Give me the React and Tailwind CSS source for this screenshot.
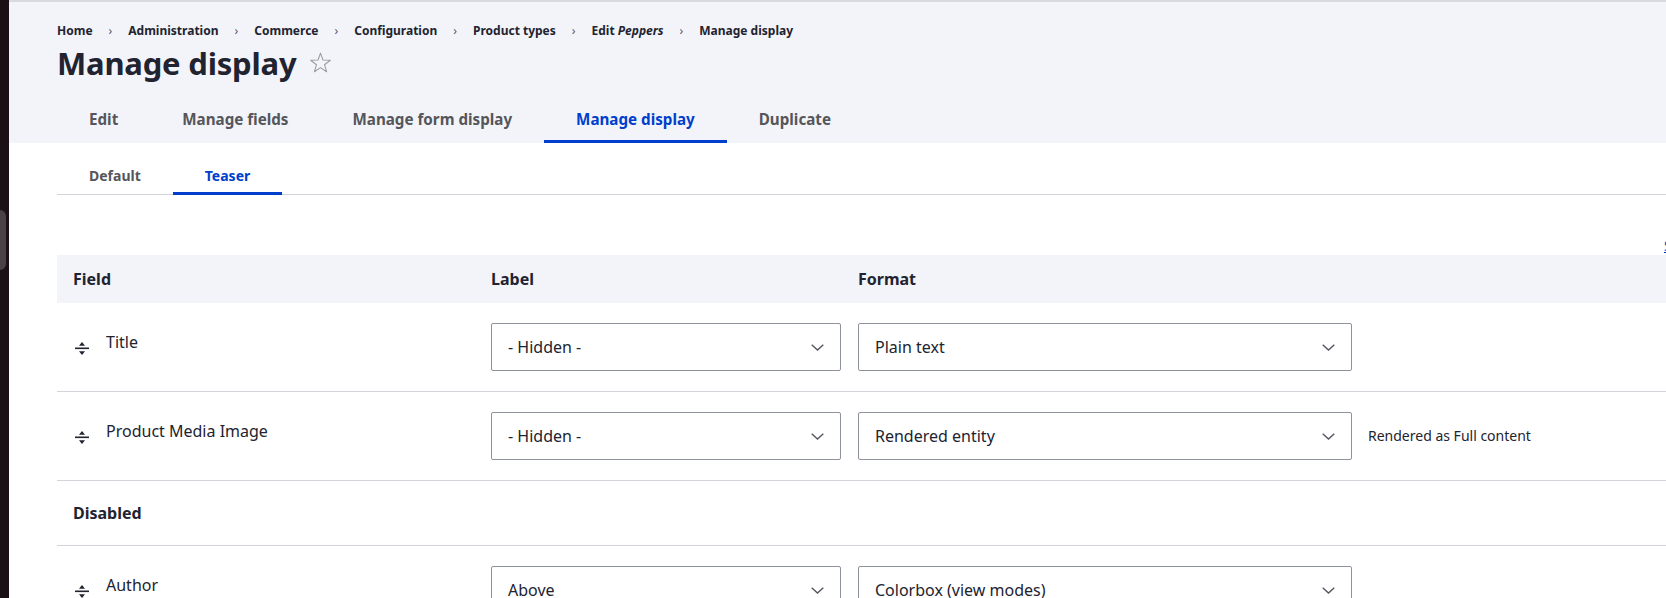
import { useState } from 'react';

const crumbs = ['Home', 'Administration', 'Commerce', 'Configuration', 'Product types'];

const tabs = ['Edit', 'Manage fields', 'Manage form display', 'Manage display', 'Duplicate'];

const rows = [
  { name: 'Title', label: '- Hidden -', format: 'Plain text', summary: '' },
  { name: 'Product Media Image', label: '- Hidden -', format: 'Rendered entity', summary: 'Rendered as Full content' },
];

function DragHandle() {
  return (
    <svg width="14" height="14" viewBox="0 0 14 14" className="shrink-0 mt-[12px]">
      <polygon points="7,0 4,3.8 10,3.8" fill="#222330" />
      <rect x="0" y="5.5" width="14" height="1.6" fill="#222330" />
      <polygon points="4,9.2 10,9.2 7,13" fill="#222330" />
    </svg>
  );
}

function Select({ value, width }) {
  return (
    <div className={`${width} h-12 border border-[#8e929c] rounded-[2px] bg-white flex items-center justify-between pl-4 pr-4 text-base text-[#222330]`}>
      <span>{value}</span>
      <svg width="13" height="7" viewBox="0 0 13 7" fill="none">
        <path d="M0.7 0.7 L6.5 6 L12.3 0.7" stroke="#545560" strokeWidth="1.4" />
      </svg>
    </div>
  );
}

function FieldRow({ row }) {
  return (
    <div className="grid grid-cols-[418px_367px_510px_1fr] border-b border-[#d3d4d9]">
      <div className="flex items-start pl-[18px] pt-[27px]">
        <DragHandle />
        <span className="ml-[17px] text-base leading-6 text-[#222330]">{row.name}</span>
      </div>
      <div className="pl-4 py-5">
        <Select value={row.label} width="w-[350px]" />
      </div>
      <div className="pl-4 py-5">
        <Select value={row.format} width="w-[494px]" />
      </div>
      <div className="pl-4 py-5">
        <div className="h-12 flex items-center text-sm text-[#222330] whitespace-nowrap">{row.summary}</div>
      </div>
    </div>
  );
}

function App() {
  const [activeSub, setActiveSub] = useState('Teaser');

  return (
    <div className="w-[1666px] h-[598px] overflow-hidden flex bg-white font-['Noto_Sans',sans-serif] text-[#222330]">
      {/* desktop edge */}
      <div className="w-[9px] shrink-0 bg-[#1b1016] pt-[210px]">
        <div className="w-[6px] h-[60px] rounded-r-md bg-[#4a4045]" />
      </div>

      <div className="flex-1 min-w-0">
        {/* Header */}
        <div className="border-t-2 border-[#d9dae0] bg-[#f3f4f9] pl-12">
          <nav className="pt-5 flex items-center text-[12px] font-bold leading-[18px]">
            {crumbs.map((c) => (
              <span key={c} className="flex items-center">
                <span>{c}</span>
                <span className="mx-4 font-normal text-[#545560]">›</span>
              </span>
            ))}
            <span>
              Edit <em>Peppers</em>
            </span>
            <span className="mx-4 font-normal text-[#545560]">›</span>
            <span>Manage display</span>
          </nav>
          <div className="mt-[3px] flex items-center h-10">
            <h1 className="text-[31px] font-bold leading-10 tracking-[-0.2px]">Manage display</h1>
            <svg width="23" height="22" viewBox="0 0 24 23" className="ml-[13px]" fill="none">
              <path
                d="M12 1.2 L14.6 8.4 L22.3 8.6 L16.2 13.3 L18.4 20.7 L12 16.3 L5.6 20.7 L7.8 13.3 L1.7 8.6 L9.4 8.4 Z"
                stroke="#9a9ca4"
                strokeWidth="1.1"
                strokeLinejoin="round"
              />
            </svg>
          </div>
          <div className="mt-3 flex">
            {tabs.map((t) => (
              <div
                key={t}
                className={`h-12 px-8 pt-[3px] flex items-center text-[15.2px] font-bold border-b-[3px] ${
                  t === 'Manage display' ? 'text-[#003ecc] border-[#003ecc]' : 'text-[#55565b] border-transparent'
                }`}
              >
                {t}
              </div>
            ))}
          </div>
        </div>

        {/* Sub tabs */}
        <div className="pl-12 mt-3">
          <div className="flex border-b border-[#d3d4d9] h-10">
            {['Default', 'Teaser'].map((t) => (
              <button
                key={t}
                onClick={() => setActiveSub(t)}
                className={`h-10 -mb-px px-8 pt-[3px] flex items-center text-[14px] font-bold border-b-[3px] ${
                  activeSub === t ? 'text-[#003ecc] border-[#003ecc]' : 'text-[#55565b] border-transparent'
                }`}
              >
                {t}
              </button>
            ))}
          </div>
        </div>

        {/* row weights link */}
        <div className="h-[60px] pl-12 pt-[38px]">
          <span className="ml-[1607px] whitespace-nowrap text-sm leading-5 text-[#003ecc] underline">Show row weights</span>
        </div>

        {/* Table */}
        <div className="ml-12">
          <div className="grid grid-cols-[418px_367px_510px_1fr] h-12 bg-[#f3f4f9] items-center text-base font-bold">
            <div className="pl-4">Field</div>
            <div className="pl-4">Label</div>
            <div className="pl-4">Format</div>
            <div />
          </div>
          {rows.map((r) => (
            <FieldRow key={r.name} row={r} />
          ))}
          <div className="border-b border-[#d3d4d9] pl-4 py-5 text-base font-bold leading-6">Disabled</div>
          <FieldRow row={{ name: 'Author', label: 'Above', format: 'Colorbox (view modes)', summary: '' }} />
        </div>
      </div>
    </div>
  );
}

export default App;
